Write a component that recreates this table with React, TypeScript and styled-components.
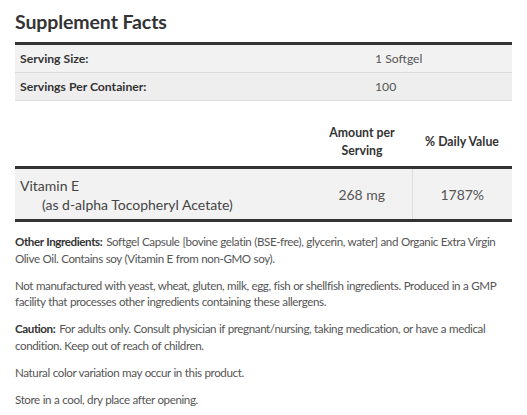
import React from "react";
import styled, { createGlobalStyle } from "styled-components";

const Global = createGlobalStyle`
  html, body { margin: 0; padding: 0; background: #fff; }
  body { font-family: Lato, "Noto Sans", sans-serif; color: #444; }
`;

const Page = styled.div`
  padding: 8px 15px 0 15px;
  width: 497px;
`;

const Title = styled.h2`
  margin: 0 0 6px 0;
  font-size: 19.5px;
  line-height: 28px;
  font-weight: 700;
  letter-spacing: -0.1px;
  color: #333;
`;

const Table = styled.table`
  width: 100%;
  border-collapse: collapse;
  font-size: 12.2px;
`;

const InfoRow = styled.tr<{ $shade: string }>`
  background: ${(p) => p.$shade};
  border-bottom: 1px solid #dcdcdc;
`;

const InfoLabel = styled.td`
  padding: 0 5px;
  height: 27px;
  font-weight: 700;
  color: #333;
  width: 345px;
`;

const InfoValue = styled.td`
  padding: 0 5px;
  color: #555;
`;

const Thick = styled.tbody`
  border-top: 3px solid #333;
`;

const FactsTable = styled(Table)`
  margin-top: 19px;
  border-bottom: 3px solid #333;
`;

const HeadCell = styled.th<{ $w?: number }>`
  font-weight: 700;
  color: #333;
  font-size: 12.3px;
  line-height: 18px;
  text-align: center;
  padding: 4px 0 6px;
  width: ${(p) => (p.$w ? p.$w + "px" : "auto")};
`;

const BodyRow = styled.tr`
  background: #f2f2f2;
`;

const NameCell = styled.td`
  padding: 7px 5px 5px;
  font-size: 14px;
  line-height: 19px;
  color: #444;
`;

const Sub = styled.div`
  padding-left: 22px;
`;

const NumCell = styled.td<{ $line?: boolean }>`
  text-align: center;
  font-size: 14px;
  color: #555;
  border-left: ${(p) => (p.$line ? "1px solid #dcdcdc" : "none")};
`;

const Notes = styled.div`
  margin-top: 12px;
  font-size: 11.6px;
  line-height: 16.5px;
  letter-spacing: -0.4px;
  word-spacing: 0.3px;
  color: #555;
`;

const Para = styled.p`
  margin: 0 0 10.5px 0;
`;

const Strong = styled.strong`
  font-weight: 700;
  color: #333;
  margin-right: 1px;
`;

export default function App() {
  return (
    <>
      <Global />
      <Page>
        <Title>Supplement Facts</Title>
        <Table>
          <Thick>
            <InfoRow $shade="#f2f2f2">
              <InfoLabel>Serving Size:</InfoLabel>
              <InfoValue>1 Softgel</InfoValue>
            </InfoRow>
            <InfoRow $shade="#eeeeee">
              <InfoLabel>Servings Per Container:</InfoLabel>
              <InfoValue>100</InfoValue>
            </InfoRow>
          </Thick>
        </Table>
        <FactsTable>
          <thead>
            <tr>
              <HeadCell />
              <HeadCell $w={100}>
                Amount per
                <br />
                Serving
              </HeadCell>
              <HeadCell $w={100}>% Daily Value</HeadCell>
            </tr>
          </thead>
          <Thick>
            <BodyRow>
              <NameCell>
                Vitamin E
                <Sub>(as d-alpha Tocopheryl Acetate)</Sub>
              </NameCell>
              <NumCell>268 mg</NumCell>
              <NumCell $line>1787%</NumCell>
            </BodyRow>
          </Thick>
        </FactsTable>
        <Notes>
          <Para>
            <Strong>Other Ingredients:</Strong> Softgel Capsule [bovine gelatin (BSE-free), glycerin, water] and
            Organic Extra Virgin Olive Oil. Contains soy (Vitamin E from non-GMO soy).
          </Para>
          <Para>
            Not manufactured with yeast, wheat, gluten, milk, egg, fish or shellfish ingredients. Produced in a GMP
            facility that processes other ingredients containing these allergens.
          </Para>
          <Para>
            <Strong>Caution:</Strong> For adults only. Consult physician if pregnant/nursing, taking medication, or
            have a medical condition. Keep out of reach of children.
          </Para>
          <Para>Natural color variation may occur in this product.</Para>
          <Para>Store in a cool, dry place after opening.</Para>
        </Notes>
      </Page>
    </>
  );
}
